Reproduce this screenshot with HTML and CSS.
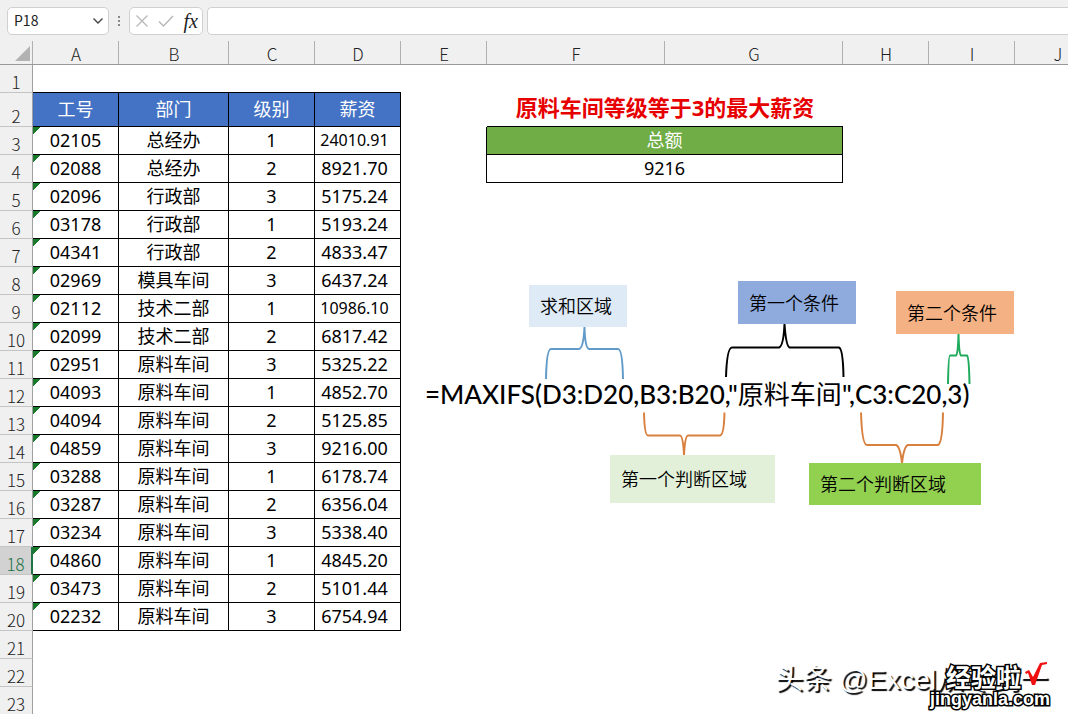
FILE: index.html
```html
<!DOCTYPE html>
<html lang="zh-CN">
<head>
<meta charset="utf-8">
<title>MAXIFS</title>
<link rel="stylesheet" href="styles.css">
</head>
<body>
<header class="bar">
  <div class="box name-box">
    <input class="name" type="text" value="P18" aria-label="名称框">
    <button class="drop" type="button" aria-label="展开名称框"><svg width="12" height="8" viewBox="0 0 12 8"><path d="M1.500 1.500L6 6l4.500-4.500" fill="none" stroke="#444" stroke-width="1.400"/></svg></button>
  </div>
  <svg class="grip" width="4" height="12" viewBox="0 0 4 12"><path d="M1 1h2v2H1zM1 5h2v2H1zM1 9h2v2H1z" fill="#888"/></svg>
  <div class="box tools">
    <button type="button" aria-label="取消"><svg width="14" height="14" viewBox="0 0 14 14"><path d="M1.500 1.500l11 11M12.500 1.500l-11 11" fill="none" stroke="#b8b8b8" stroke-width="1.300"/></svg></button>
    <button type="button" aria-label="输入"><svg width="16" height="14" viewBox="0 0 16 14"><path d="M1 7.500L5.500 12 15 2" fill="none" stroke="#b8b8b8" stroke-width="1.500"/></svg></button>
    <button class="fx" type="button" aria-label="插入函数">fx</button>
  </div>
  <input class="box formula" type="text" aria-label="编辑栏">
</header>
<main class="sheet">
  <table class="grid">
    <colgroup><col class="w-num"><col class="w-s"><col class="w-m"><col class="w-s"><col class="w-s"><col class="w-s"><col class="w-l"><col class="w-l"><col class="w-s"><col class="w-s"><col></colgroup>
    <thead>
      <tr><th class="corner"><svg width="15" height="15" viewBox="0 0 15 15"><path d="M15 0v15H0z" fill="#b2b2b2"/></svg></th><th>A</th><th>B</th><th>C</th><th>D</th><th>E</th><th>F</th><th>G</th><th>H</th><th>I</th><th>J</th></tr>
    </thead>
    <tbody>
      <tr class="first"><th>1</th><td class="under" colspan="4"></td><td colspan="6"></td></tr>
      <tr class="head"><th>2</th><td class="c h">工号</td><td class="c h">部门</td><td class="c h">级别</td><td class="c h">薪资</td><td></td><td class="title" colspan="2">原料车间等级等于3的最大薪资</td><td colspan="3"></td></tr>
      <tr><th>3</th><td class="c id">02105</td><td class="c">总经办</td><td class="c">1</td><td class="c pay long">24010.91</td><td class="edge"></td><td class="c total" colspan="2">总额</td><td colspan="3"></td></tr>
      <tr><th>4</th><td class="c id">02088</td><td class="c">总经办</td><td class="c">2</td><td class="c pay">8921.70</td><td class="edge"></td><td class="c" colspan="2">9216</td><td colspan="3"></td></tr>
      <tr><th>5</th><td class="c id">02096</td><td class="c">行政部</td><td class="c">3</td><td class="c pay">5175.24</td><td colspan="6"></td></tr>
      <tr><th>6</th><td class="c id">03178</td><td class="c">行政部</td><td class="c">1</td><td class="c pay">5193.24</td><td colspan="6"></td></tr>
      <tr><th>7</th><td class="c id">04341</td><td class="c">行政部</td><td class="c">2</td><td class="c pay">4833.47</td><td colspan="6"></td></tr>
      <tr><th>8</th><td class="c id">02969</td><td class="c">模具车间</td><td class="c">3</td><td class="c pay">6437.24</td><td colspan="6"></td></tr>
      <tr><th>9</th><td class="c id">02112</td><td class="c">技术二部</td><td class="c">1</td><td class="c pay long">10986.10</td><td colspan="6"></td></tr>
      <tr><th>10</th><td class="c id">02099</td><td class="c">技术二部</td><td class="c">2</td><td class="c pay">6817.42</td><td colspan="6"></td></tr>
      <tr><th>11</th><td class="c id">02951</td><td class="c">原料车间</td><td class="c">3</td><td class="c pay">5325.22</td><td colspan="6"></td></tr>
      <tr><th>12</th><td class="c id">04093</td><td class="c">原料车间</td><td class="c">1</td><td class="c pay">4852.70</td><td colspan="6"></td></tr>
      <tr><th>13</th><td class="c id">04094</td><td class="c">原料车间</td><td class="c">2</td><td class="c pay">5125.85</td><td colspan="6"></td></tr>
      <tr><th>14</th><td class="c id">04859</td><td class="c">原料车间</td><td class="c">3</td><td class="c pay">9216.00</td><td colspan="6"></td></tr>
      <tr><th>15</th><td class="c id">03288</td><td class="c">原料车间</td><td class="c">1</td><td class="c pay">6178.74</td><td colspan="6"></td></tr>
      <tr><th>16</th><td class="c id">03287</td><td class="c">原料车间</td><td class="c">2</td><td class="c pay">6356.04</td><td colspan="6"></td></tr>
      <tr><th>17</th><td class="c id">03234</td><td class="c">原料车间</td><td class="c">3</td><td class="c pay">5338.40</td><td colspan="6"></td></tr>
      <tr class="active"><th>18</th><td class="c id">04860</td><td class="c">原料车间</td><td class="c">1</td><td class="c pay">4845.20</td><td colspan="6"></td></tr>
      <tr><th>19</th><td class="c id">03473</td><td class="c">原料车间</td><td class="c">2</td><td class="c pay">5101.44</td><td colspan="6"></td></tr>
      <tr><th>20</th><td class="c id">02232</td><td class="c">原料车间</td><td class="c">3</td><td class="c pay">6754.94</td><td colspan="6"></td></tr>
      <tr><th>21</th><td colspan="10"></td></tr>
      <tr><th>22</th><td colspan="10"></td></tr>
      <tr><th>23</th><td colspan="10"></td></tr>
    </tbody>
  </table>
  <div class="notes">
    <svg class="braces" width="658" height="250" viewBox="410 270 658 250" fill="none" stroke-width="2">
      <path stroke="#629bc9" d="M546 379Q546.500 349 551 349H579Q583.500 348 584.500 327Q585 348 589 349H618Q622.500 349 623 379"/>
      <path stroke="#000" d="M726 377Q727 347.500 732 347.500H779Q783.500 346 784.500 324Q786 346 789.500 347.500H839Q843 349 843.500 377"/>
      <path stroke="#1fab5c" d="M948 384Q948.500 355.500 950 355.500H956Q958 354 958.500 334Q959 354 961 355.500H967Q969 357 969.500 384"/>
      <path stroke="#d9803f" d="M644 412.500Q644.500 435.500 648 435.500H680Q683 436 684 455Q685 436 688 435.500H720Q724 435 724.500 412.500"/>
      <path stroke="#d9803f" d="M861 412.500Q862 445 867 445H896Q900 446 902 463Q904 446 908 445H938Q942.500 443 943 412.500"/>
    </svg>
    <div class="note sum">求和区域</div>
    <div class="note cond1">第一个条件</div>
    <div class="note cond2">第二个条件</div>
    <div class="note range1">第一个判断区域</div>
    <div class="note range2">第二个判断区域</div>
    <div class="expr">=MAXIFS(D3:D20,B3:B20,"<span class="han">原料车间</span>",C3:C20,3)</div>
  </div>
</main>
<div class="author">头条 @Excel从零到一</div>
<div class="site">
  <div class="site-name">经验啦</div>
  <div class="site-url">jingyanla.com</div>
  <svg class="tick" width="24" height="24" viewBox="0 0 24 24"><path d="M1 10l4-2 4 7L16 1l7-1v2l-5 1-7 20H8L4 11l-2 1z" fill="#f01010"/></svg>
</div>
</body>
</html>
```
FILE: styles.css
```css
* { box-sizing: border-box; }
body {
  margin: 0;
  height: 100vh;
  position: relative;
  overflow: hidden;
  background: #fff;
  color: #000;
  font-family: "Noto Sans", "Noto Sans CJK SC", sans-serif;
}
button { border: 0; padding: 0; background: none; display: flex; align-items: center; }

.bar { display: flex; align-items: center; height: 35px; padding: 7px 0 0 7px; background: #f0f0f0; }
.box { height: 28px; border: 1px solid #d0d0d0; border-radius: 5px; background: #fff; }
.name-box { display: flex; align-items: center; width: 102px; padding: 0 4px 0 6px; }
.name { flex: 1; min-width: 0; height: 24px; border: 0; padding: 0 0 2px; outline: 0; color: #222; font: 14px "Noto Sans CJK SC", sans-serif; }
.grip { margin: 0 8px; }
.tools { display: flex; align-items: center; justify-content: space-between; width: 74px; padding: 0 4px 0 5px; }
.fx { color: #222; font: italic 20px/20px "Liberation Serif", serif; }
.formula { flex: 1; min-width: 0; margin-left: 4px; border-right: 0; border-radius: 5px 0 0 5px; padding: 0 8px; outline: 0; font-size: 15px; }

.sheet { position: relative; }
.grid { table-layout: fixed; border-collapse: separate; border-spacing: 0; width: 100%; min-width: 1101px; }
.w-num { width: 33px; }
.w-s { width: 86px; }
.w-m { width: 110px; }
.w-l { width: 178px; }
.grid tr { height: 28px; }
.grid thead tr { height: 30px; }
.grid .head { height: 34px; }
.grid th, .grid td { padding: 0; line-height: 20px; }
.grid th {
  background: #f0f0f0;
  color: #222;
  font: 300 17px/20px "Noto Sans CJK SC", sans-serif;
  vertical-align: bottom;
  border-right: 1px solid #a0a0a0;
  border-bottom: 1px solid #c4c4c4;
}
.grid thead th {
  border-right: 0;
  border-bottom: 1px solid #999;
  background: linear-gradient(#b0b0b0, #b0b0b0) right bottom / 1px 23px no-repeat #f0f0f0;
}
.grid .corner { padding: 0 3px 3px 0; text-align: right; line-height: 0; }
.grid .corner svg { display: inline-block; vertical-align: bottom; }
.grid td.c {
  padding-bottom: 2px;
  border-right: 1px solid #000;
  border-bottom: 1px solid #000;
  text-align: center;
  font-size: 18px;
}
.grid td.under { border-bottom: 1px solid #000; }
.grid td.edge { border-right: 1px solid #000; }
.grid td.h { background: #4472c4; color: #fff; }
.grid td.id { background: linear-gradient(135deg, #1a7a2c 5px, transparent 5px); }
.grid td.pay { padding-right: 6px; }
.grid td.long { font-size: 16px; }
.grid td.title { padding-bottom: 6px; border-bottom: 1px solid #000; color: #e60000; font-size: 22px; font-weight: 700; text-align: center; }
.grid td.total { background: #70ad47; color: #fff; }
.grid .active th { background: #d2d2d2; color: #217346; border-right: 2px solid #217346; }

.notes { position: absolute; left: 410px; top: 235px; width: 658px; height: 250px; }
.braces { display: block; }
.note { position: absolute; display: flex; align-items: center; padding: 0 0 2px 11px; font: 350 18px/20px "Noto Sans CJK SC", sans-serif; white-space: nowrap; }
.sum { left: 119px; top: 15px; width: 98px; height: 42px; background: #deeaf6; }
.cond1 { left: 328px; top: 11px; width: 118px; height: 43px; background: #8faadc; }
.cond2 { left: 486px; top: 21px; width: 118px; height: 43px; background: #f4b183; }
.range1 { left: 200px; top: 185px; width: 165px; height: 48px; background: #e2f0d9; }
.range2 { left: 399px; top: 193px; width: 172px; height: 42px; background: #92d050; }
.expr { position: absolute; left: 15px; top: 108px; font: 500 26px/32px Lato, "Noto Sans CJK SC", sans-serif; white-space: nowrap; }
.han { font-weight: 400; }

.author { position: absolute; right: 20px; bottom: 16px; color: #fff; font: 28px/36px "Liberation Sans", "Noto Sans CJK SC", sans-serif; text-shadow: 2px 2px 1px #000; white-space: nowrap; }
.site { position: absolute; right: 16px; bottom: 6px; width: 122px; color: #fff; -webkit-text-stroke: 3px #000; paint-order: stroke fill; }
.site-name { padding-left: 16px; font: 700 25px/28px "Noto Sans CJK SC", sans-serif; }
.site-url { font: 700 18px/18px "Liberation Sans", sans-serif; white-space: nowrap; }
.tick { position: absolute; right: 4px; top: 0; }
```
